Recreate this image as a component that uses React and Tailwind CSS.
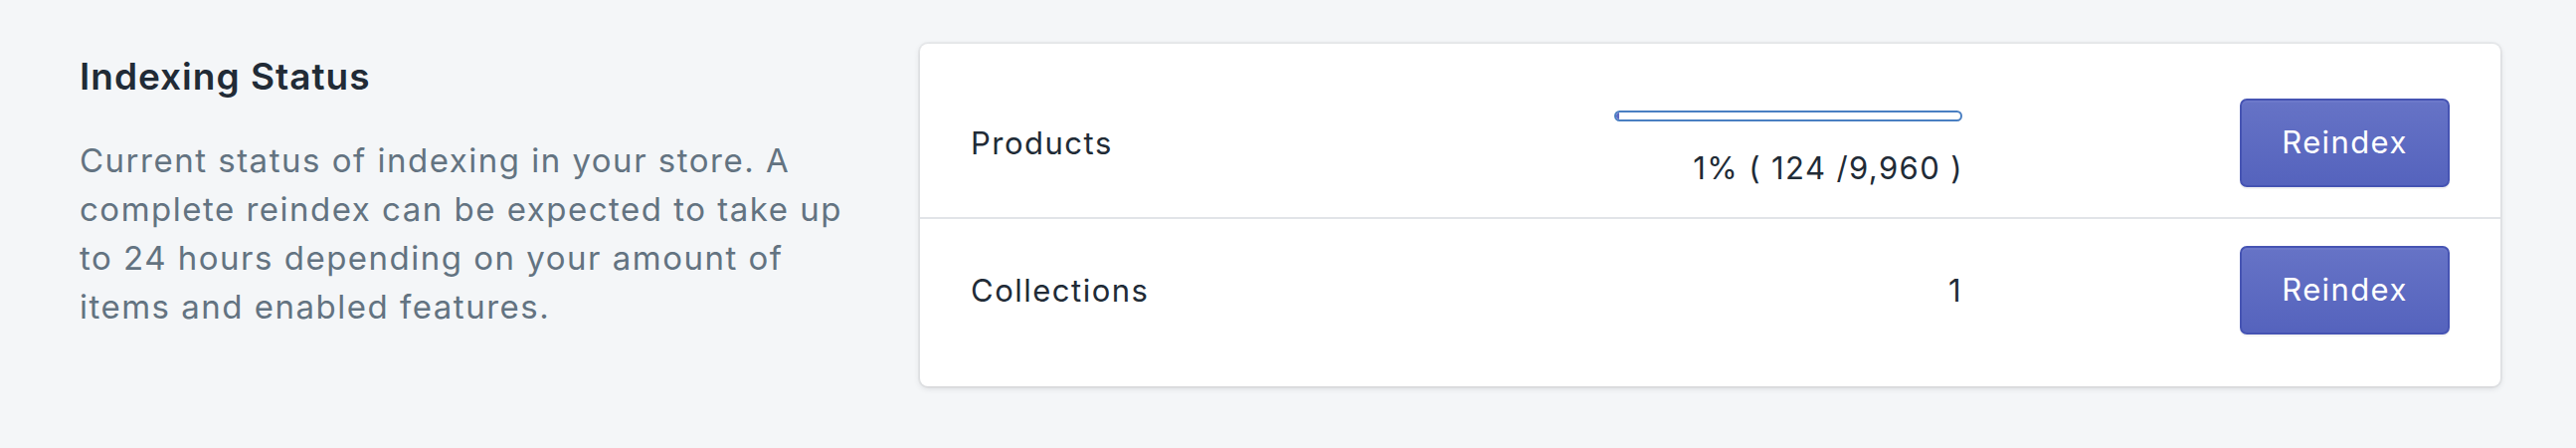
import React from "react";

function Row({ name, children, first }) {
  return (
    <div
      className={
        "flex items-center px-[51px] " +
        (first ? "pt-[29px] pb-[29px]" : "pt-[27px] pb-[29px] border-t-2 border-[#e1e4e8]")
      }
    >
      <div className="flex-1 text-[31px] leading-[40px] tracking-[1.5px] text-[#212b36]">{name}</div>
      {children}
      <button className="ml-[279px] w-[211px] h-[89px] rounded-[7px] border-2 border-[#4654b3] bg-gradient-to-b from-[#6673c6] to-[#5563bd] text-white text-[31px] tracking-[1.4px] shadow-[inset_0_2px_0_0_#6c78ca,0_2px_0_0_rgba(22,29,37,0.05)]">
        Reindex
      </button>
    </div>
  );
}

export default function App() {
  return (
    <div
      className="w-[2590px] h-[450px] bg-[#f4f6f8] flex pl-[80px] pt-[44px]"
      style={{ fontFamily: "Inter, 'Noto Sans', sans-serif" }}
    >
      <div className="w-[845px] shrink-0 pt-[9px]">
        <h2 className="text-[37px] leading-[48px] font-semibold tracking-[1px] text-[#212b36]">Indexing Status</h2>
        <p className="mt-[36px] w-[780px] text-[33px] leading-[49px] tracking-[1.5px] text-[#637381]">
          Current status of indexing in your store. A complete reindex can be expected to take up to 24 hours depending on your amount of items and enabled features.
        </p>
      </div>
      <div className="w-[1589px] h-[344px] shrink-0 bg-white rounded-[8px] shadow-[0_0_0_2px_rgba(63,63,68,0.05),0_2px_6px_0_rgba(63,63,68,0.15)] pt-[25px]">
        <Row name="Products" first>
          <div className="w-[350px] self-start pt-[13px] flex flex-col items-end">
            <div className="w-full h-[11px] rounded-full border-2 border-[#4a7fc2] bg-white overflow-hidden">
              <div className="h-full bg-[#5c6ac4]" style={{ width: "1%" }} />
            </div>
            <div className="mt-[27px] mr-[-1px] text-[31px] leading-[40px] tracking-[1.4px] text-[#212b36]">1% ( 124 /9,960 )</div>
          </div>
        </Row>
        <Row name="Collections">
          <div className="w-[350px] text-right text-[31px] leading-[40px] tracking-[1.4px] text-[#212b36]">1</div>
        </Row>
      </div>
    </div>
  );
}
